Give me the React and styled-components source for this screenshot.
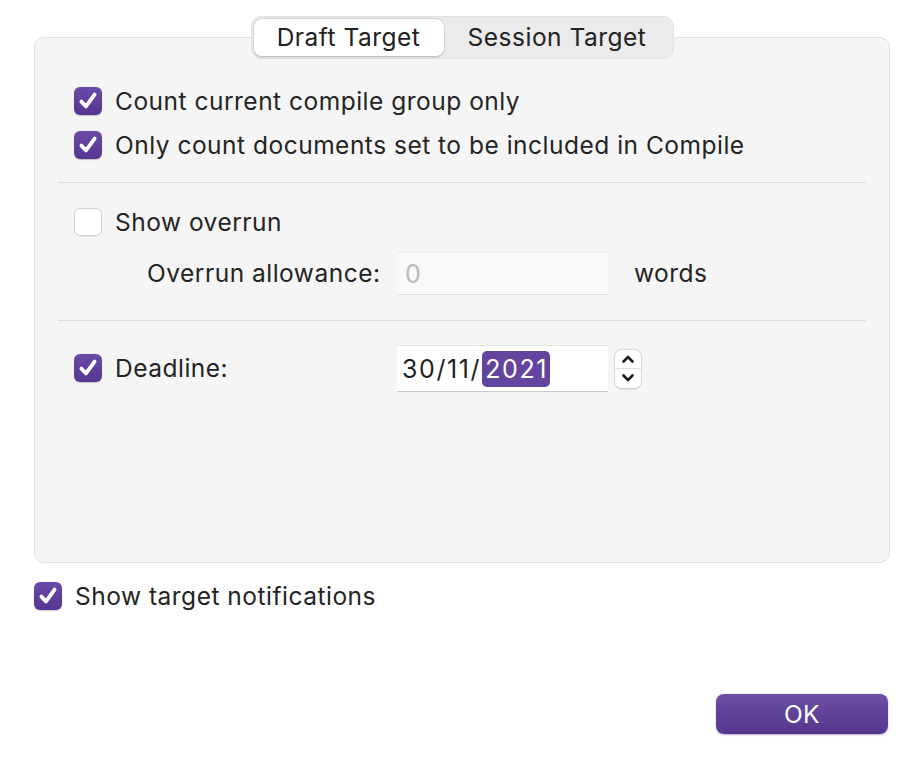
import React from 'react';
import styled, { createGlobalStyle } from 'styled-components';

const GlobalStyle = createGlobalStyle`
	html, body {
		margin: 0;
		padding: 0;
		background: #ffffff;
	}
	body {
		font-family: Inter, 'Noto Sans', 'Liberation Sans', sans-serif;
		color: #262626;
	}
`;

const Page = styled.div`
	width: 920px;
	height: 764px;
	box-sizing: border-box;
	padding: 16px 30px 0 34px;
	display: flex;
	flex-direction: column;
`;

const TabBar = styled.div`
	align-self: center;
	position: relative;
	z-index: 1;
	display: flex;
	height: 43px;
	box-sizing: border-box;
	padding: 2px;
	border-radius: 10px;
	background: #ebebeb;
	border: 1px solid #e2e2e2;
`;

const Tab = styled.div`
	display: flex;
	align-items: center;
	justify-content: center;
	width: ${(p) => p.$w}px;
	padding-bottom: 2px;
	box-sizing: border-box;
	border-radius: 8px;
	font-size: 24.5px;
	letter-spacing: 0.5px;
	color: #222;
	background: ${(p) => (p.$active ? '#ffffff' : 'transparent')};
	box-shadow: ${(p) => (p.$active ? '0 0.5px 2px rgba(0,0,0,0.22), 0 0 0 0.5px rgba(0,0,0,0.06)' : 'none')};
`;

const Panel = styled.div`
	margin-top: -22px;
	height: 526px;
	box-sizing: border-box;
	padding: 41px 23px 0;
	background: #f5f5f5;
	border: 1px solid #e3e3e3;
	border-radius: 10px;
`;

const Row = styled.div`
	display: flex;
	align-items: center;
	height: ${(p) => p.$h ?? 44}px;
	padding-left: ${(p) => p.$indent ?? 16}px;
	margin-top: ${(p) => p.$mt ?? 0}px;
	font-size: 24.5px;
	letter-spacing: 0.5px;
	color: #242424;
`;

const Divider = styled.div`
	height: 1px;
	background: #dcdcdc;
	margin-top: ${(p) => p.$mt}px;
`;

const Box = styled.span`
	flex: none;
	width: 28px;
	height: 28px;
	box-sizing: border-box;
	border-radius: 6px;
	margin-right: 13px;
	display: flex;
	align-items: center;
	justify-content: center;
	background: ${(p) => (p.$on ? 'linear-gradient(#6a4aa6, #55358f)' : '#ffffff')};
	border: ${(p) => (p.$on ? 'none' : '1px solid #d2d2d2')};
	box-shadow: ${(p) => (p.$on ? '0 0.5px 1px rgba(0,0,0,0.2)' : '0 0.5px 1px rgba(0,0,0,0.06)')};
`;

const Check = ({ on }) => (
	<Box $on={on}>
		{on && (
			<svg width="24" height="24" viewBox="0 0 24 24">
				<path d="M5.4 12.6 L10 17.4 L18.6 5.6" fill="none" stroke="#fff" strokeWidth="3.8" strokeLinecap="round" strokeLinejoin="round" />
			</svg>
		)}
	</Box>
);

const Label = styled.span`
	width: ${(p) => (p.$w ? `${p.$w}px` : 'auto')};
	flex: none;
`;

const Field = styled.div`
	width: 211px;
	height: ${(p) => p.$h}px;
	box-sizing: border-box;
	display: flex;
	align-items: center;
	padding-left: ${(p) => p.$pl}px;
	font-size: 25px;
	letter-spacing: ${(p) => p.$ls || 0.5}px;
	background: ${(p) => (p.$disabled ? '#f9f9f9' : '#ffffff')};
	color: ${(p) => (p.$disabled ? '#b9b9b9' : '#1f1f1f')};
	border-top: 1px solid ${(p) => (p.$disabled ? '#ececec' : '#e6e6e6')};
	box-shadow: 0 1px 0 ${(p) => (p.$disabled ? '#dedede' : '#c9c9c9')};
	margin-right: ${(p) => p.$mr || 0}px;
`;

const Selected = styled.span`
	background: #63449e;
	color: #fff;
	border-radius: 5px;
	padding: 3px 2px 3px 3px;
	margin-left: 1px;
`;

const Stepper = styled.div`
	width: 28px;
	height: 40px;
	box-sizing: border-box;
	border-radius: 8px;
	background: #fff;
	border: 1px solid #d6d6d6;
	box-shadow: 0 0.5px 1px rgba(0,0,0,0.08);
	display: flex;
	flex-direction: column;
	margin-top: 1px;
`;

const StepHalf = styled.div`
	flex: 1;
	display: flex;
	align-items: center;
	justify-content: center;
	border-top: ${(p) => (p.$bottom ? '1px solid #e2e2e2' : 'none')};
`;

const Chevron = ({ up }) => (
	<svg width="14" height="10" viewBox="0 0 14 10">
		<path d={up ? 'M2.5 7.5 L7 3 L11.5 7.5' : 'M2.5 2.5 L7 7 L11.5 2.5'} fill="none" stroke="#1e1e1e" strokeWidth="2.6" strokeLinecap="round" strokeLinejoin="round" />
	</svg>
);

const Footer = styled.div`
	display: flex;
	justify-content: flex-end;
	margin-top: 76px;
	padding-right: 2px;
`;

const OkButton = styled.button`
	width: 172px;
	height: 40px;
	border: none;
	border-radius: 8px;
	background: linear-gradient(#6c4ea3, #55368f);
	box-shadow: 0 0.5px 2px rgba(60, 30, 110, 0.35);
	color: #fff;
	font-family: inherit;
	font-size: 24.5px;
	letter-spacing: 0.5px;
	padding: 0;
`;

const App = () => (
	<Page>
		<GlobalStyle />
		<TabBar>
			<Tab $active $w={190}>Draft Target</Tab>
			<Tab $w={227}>Session Target</Tab>
		</TabBar>
		<Panel>
			<Row>
				<Check on />
				<Label>Count current compile group only</Label>
			</Row>
			<Row>
				<Check on />
				<Label>Only count documents set to be included in Compile</Label>
			</Row>
			<Divider $mt={15} />
			<Row $mt={17}>
				<Check on={false} />
				<Label>Show overrun</Label>
			</Row>
			<Row $mt={7} $indent={89}>
				<Label $w={250}>Overrun allowance:</Label>
				<Field $disabled $h={42} $pl={8} $mr={26}>0</Field>
				<Label>words</Label>
			</Row>
			<Divider $mt={25} />
			<Row $mt={24} $h={46}>
				<Check on />
				<Label $w={282}>Deadline:</Label>
				<Field $h={46} $pl={5} $mr={6} $ls={1.6}>
					30/11/<Selected>2021</Selected>
				</Field>
				<Stepper>
					<StepHalf><Chevron up /></StepHalf>
					<StepHalf $bottom><Chevron /></StepHalf>
				</Stepper>
			</Row>
		</Panel>
		<Row $mt={11} $indent={0}>
			<Check on />
			<Label>Show target notifications</Label>
		</Row>
		<Footer>
			<OkButton>OK</OkButton>
		</Footer>
	</Page>
);

export default App;
